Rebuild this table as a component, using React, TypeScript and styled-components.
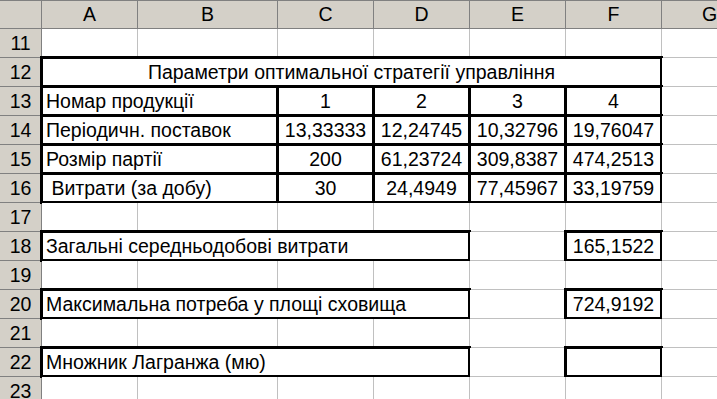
import styled, { createGlobalStyle } from "styled-components";

const GlobalStyle = createGlobalStyle`
    html, body {
        margin: 0;
        padding: 0;
        background: #ffffff;
    }
    body {
        font-family: "Liberation Sans", Arial, sans-serif;
    }
`;

const Sheet = styled.div`
    display: grid;
    grid-template-columns: 42px 96px 140px 96px 96px 96px 96px 96px;
    grid-auto-rows: 29px;
    width: 717px;
    height: 399px;
    overflow: hidden;
    font-size: 19.5px;
    color: #000;
`;

const Corner = styled.div`
    background: #d4d0c8;
    border-top: 1px solid #808080;
    border-right: 1px solid #808080;
    border-bottom: 1px solid #808080;
`;

const ColHead = styled.div`
    background: #d4d0c8;
    border-top: 1px solid #808080;
    border-right: 1px solid #808080;
    border-bottom: 1px solid #808080;
    display: flex;
    align-items: center;
    justify-content: center;
    line-height: 27px;
`;

const RowHead = styled.div`
    background: #d4d0c8;
    border-right: 1px solid #808080;
    border-bottom: 1px solid #808080;
    display: flex;
    align-items: center;
    justify-content: center;
    line-height: 28px;
`;

const Cell = styled.div<{ $span?: number; $align?: string; $boxed?: boolean }>`
    position: relative;
    grid-column: span ${(p) => p.$span || 1};
    background: #fff;
    border-right: 1px solid #c0c0c0;
    border-bottom: 1px solid #c0c0c0;
    display: flex;
    align-items: center;
    justify-content: ${(p) =>
        p.$align === "left" ? "flex-start" : p.$align === "right" ? "flex-end" : "center"};
    padding: 0 4px;
    line-height: 28px;
    white-space: pre;

    ${(p) =>
        p.$boxed &&
        `
        &::after {
            content: "";
            position: absolute;
            inset: -2px;
            border: 3px solid #000;
            pointer-events: none;
        }
    `}
`;

type CellDef = { text?: string; span?: number; align?: string; boxed?: boolean };

const blank = (n: number): CellDef[] => Array.from({ length: n }, () => ({}));

const tableRow = (label: string, values: string[]): CellDef[] => [
    { text: label, span: 2, align: "left", boxed: true },
    ...values.map((v) => ({ text: v, boxed: true })),
    {},
];

const summaryRow = (label: string, value: string): CellDef[] => [
    { text: label, span: 4, align: "left", boxed: true },
    {},
    { text: value, boxed: true },
    {},
];

const rows: { n: number; cells: CellDef[] }[] = [
    { n: 11, cells: blank(7) },
    {
        n: 12,
        cells: [
            { text: "Параметри оптимальної стратегії управління", span: 6, boxed: true },
            {},
        ],
    },
    { n: 13, cells: tableRow("Номар продукції", ["1", "2", "3", "4"]) },
    { n: 14, cells: tableRow("Періодичн. поставок", ["13,33333", "12,24745", "10,32796", "19,76047"]) },
    { n: 15, cells: tableRow("Розмір партії", ["200", "61,23724", "309,8387", "474,2513"]) },
    { n: 16, cells: tableRow(" Витрати (за добу)", ["30", "24,4949", "77,45967", "33,19759"]) },
    { n: 17, cells: blank(7) },
    { n: 18, cells: summaryRow("Загальні середньодобові витрати", "165,1522") },
    { n: 19, cells: blank(7) },
    { n: 20, cells: summaryRow("Максимальна потреба у площі сховища", "724,9192") },
    { n: 21, cells: blank(7) },
    { n: 22, cells: summaryRow("Множник Лагранжа (мю)", "") },
    { n: 23, cells: blank(7) },
];

const columns = ["A", "B", "C", "D", "E", "F", "G"];

function App() {
    return (
        <>
            <GlobalStyle />
            <Sheet>
                <Corner />
                {columns.map((c) => (
                    <ColHead key={c}>{c}</ColHead>
                ))}
                {rows.map((row) => [
                    <RowHead key={`h${row.n}`}>{row.n}</RowHead>,
                    ...row.cells.map((cell, i) => (
                        <Cell
                            key={`${row.n}-${i}`}
                            $span={cell.span}
                            $align={cell.align}
                            $boxed={cell.boxed}
                        >
                            {cell.text}
                        </Cell>
                    )),
                ])}
            </Sheet>
        </>
    );
}

export default App;
